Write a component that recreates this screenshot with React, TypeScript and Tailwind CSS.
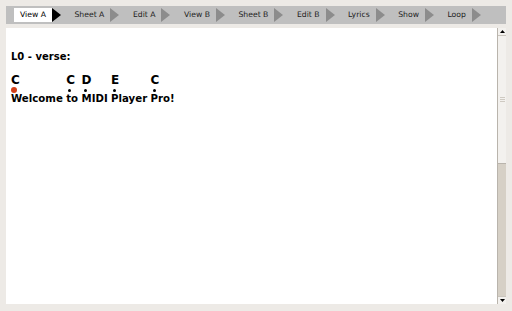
const tabs = ['View A', 'Sheet A', 'Edit A', 'View B', 'Sheet B', 'Edit B', 'Lyrics', 'Show', 'Loop'];

const words = [
  { chord: 'C', text: 'Welcome', first: true },
  { chord: 'C', text: 'to' },
  { chord: 'D', text: 'MIDI' },
  { chord: 'E', text: 'Player' },
  { chord: 'C', text: 'Pro!' },
];

function Arrow({ active }: { active: boolean }) {
  return (
    <svg width="9" height="14" viewBox="0 0 9 14" className="shrink-0">
      <path d="M0 0 L9 7 L0 14 Z" fill={active ? '#000000' : '#8c8c8c'} />
    </svg>
  );
}

function Scrollbar() {
  return (
    <div className="flex w-[9px] flex-col border-l border-[#b9b4ac] bg-[#f3f1ee]">
      <div className="flex h-[8px] items-center justify-center border-b border-[#c9c4bc]">
        <svg width="5" height="4" viewBox="0 0 5 4">
          <path d="M2.5 0 L5 3 L0 3 Z" fill="#000" />
        </svg>
      </div>
      <div className="flex h-[128px] items-center justify-center border-b border-[#b9b4ac]">
        <div className="flex flex-col gap-[1px]">
          <div className="h-px w-[5px] bg-[#cfcac2]" />
          <div className="h-px w-[5px] bg-[#cfcac2]" />
          <div className="h-px w-[5px] bg-[#cfcac2]" />
        </div>
      </div>
      <div className="flex-1 bg-[#d6d0c6]" />
      <div className="flex h-[8px] items-center justify-center border-t border-[#c9c4bc]">
        <svg width="5" height="4" viewBox="0 0 5 4">
          <path d="M0 0 L5 0 L2.5 3 Z" fill="#000" />
        </svg>
      </div>
    </div>
  );
}

export default function App() {
  return (
    <div className="flex h-[311px] w-[512px] flex-col gap-[4px] bg-[#edeae6] p-[6px] pb-[7px] font-['DejaVu_Sans',sans-serif]">
      <div className="flex h-[18px] items-center overflow-hidden whitespace-nowrap bg-[#bfbfbf] pl-[8px]">
        {tabs.map((t, i) => (
          <div key={t} className="mr-[7.5px] flex shrink-0 items-center">
            <div
              className={
                i === 0
                  ? 'flex h-[14px] items-center bg-white px-[6px] text-[7.7px] leading-none text-black'
                  : 'flex h-[14px] items-center px-[6px] text-[7.7px] leading-none text-[#222]'
              }
            >
              {t}
            </div>
            <Arrow active={i === 0} />
          </div>
        ))}
      </div>
      <div className="flex flex-1 bg-white">
        <div className="flex-1 px-[5px] pt-[22px] font-bold text-black">
          <div className="text-[10px] leading-[13px]">L0 - verse:</div>
          <div className="mt-[11px] flex">
            {words.map((w, i) => (
              <div key={i} className="mr-[3.4px] flex flex-col">
                <div className="text-[12px] leading-[13px]">{w.chord}</div>
                <div className="flex h-[6px] items-center">
                  {w.first ? (
                    <div className="h-[6px] w-[6px] rounded-full bg-[#d23f18]" />
                  ) : (
                    <div className="ml-[2px] h-[3px] w-[3px] rounded-full bg-black" />
                  )}
                </div>
                <div className="text-[10.2px] leading-[12px]">{w.text}</div>
              </div>
            ))}
          </div>
        </div>
        <Scrollbar />
      </div>
    </div>
  );
}
